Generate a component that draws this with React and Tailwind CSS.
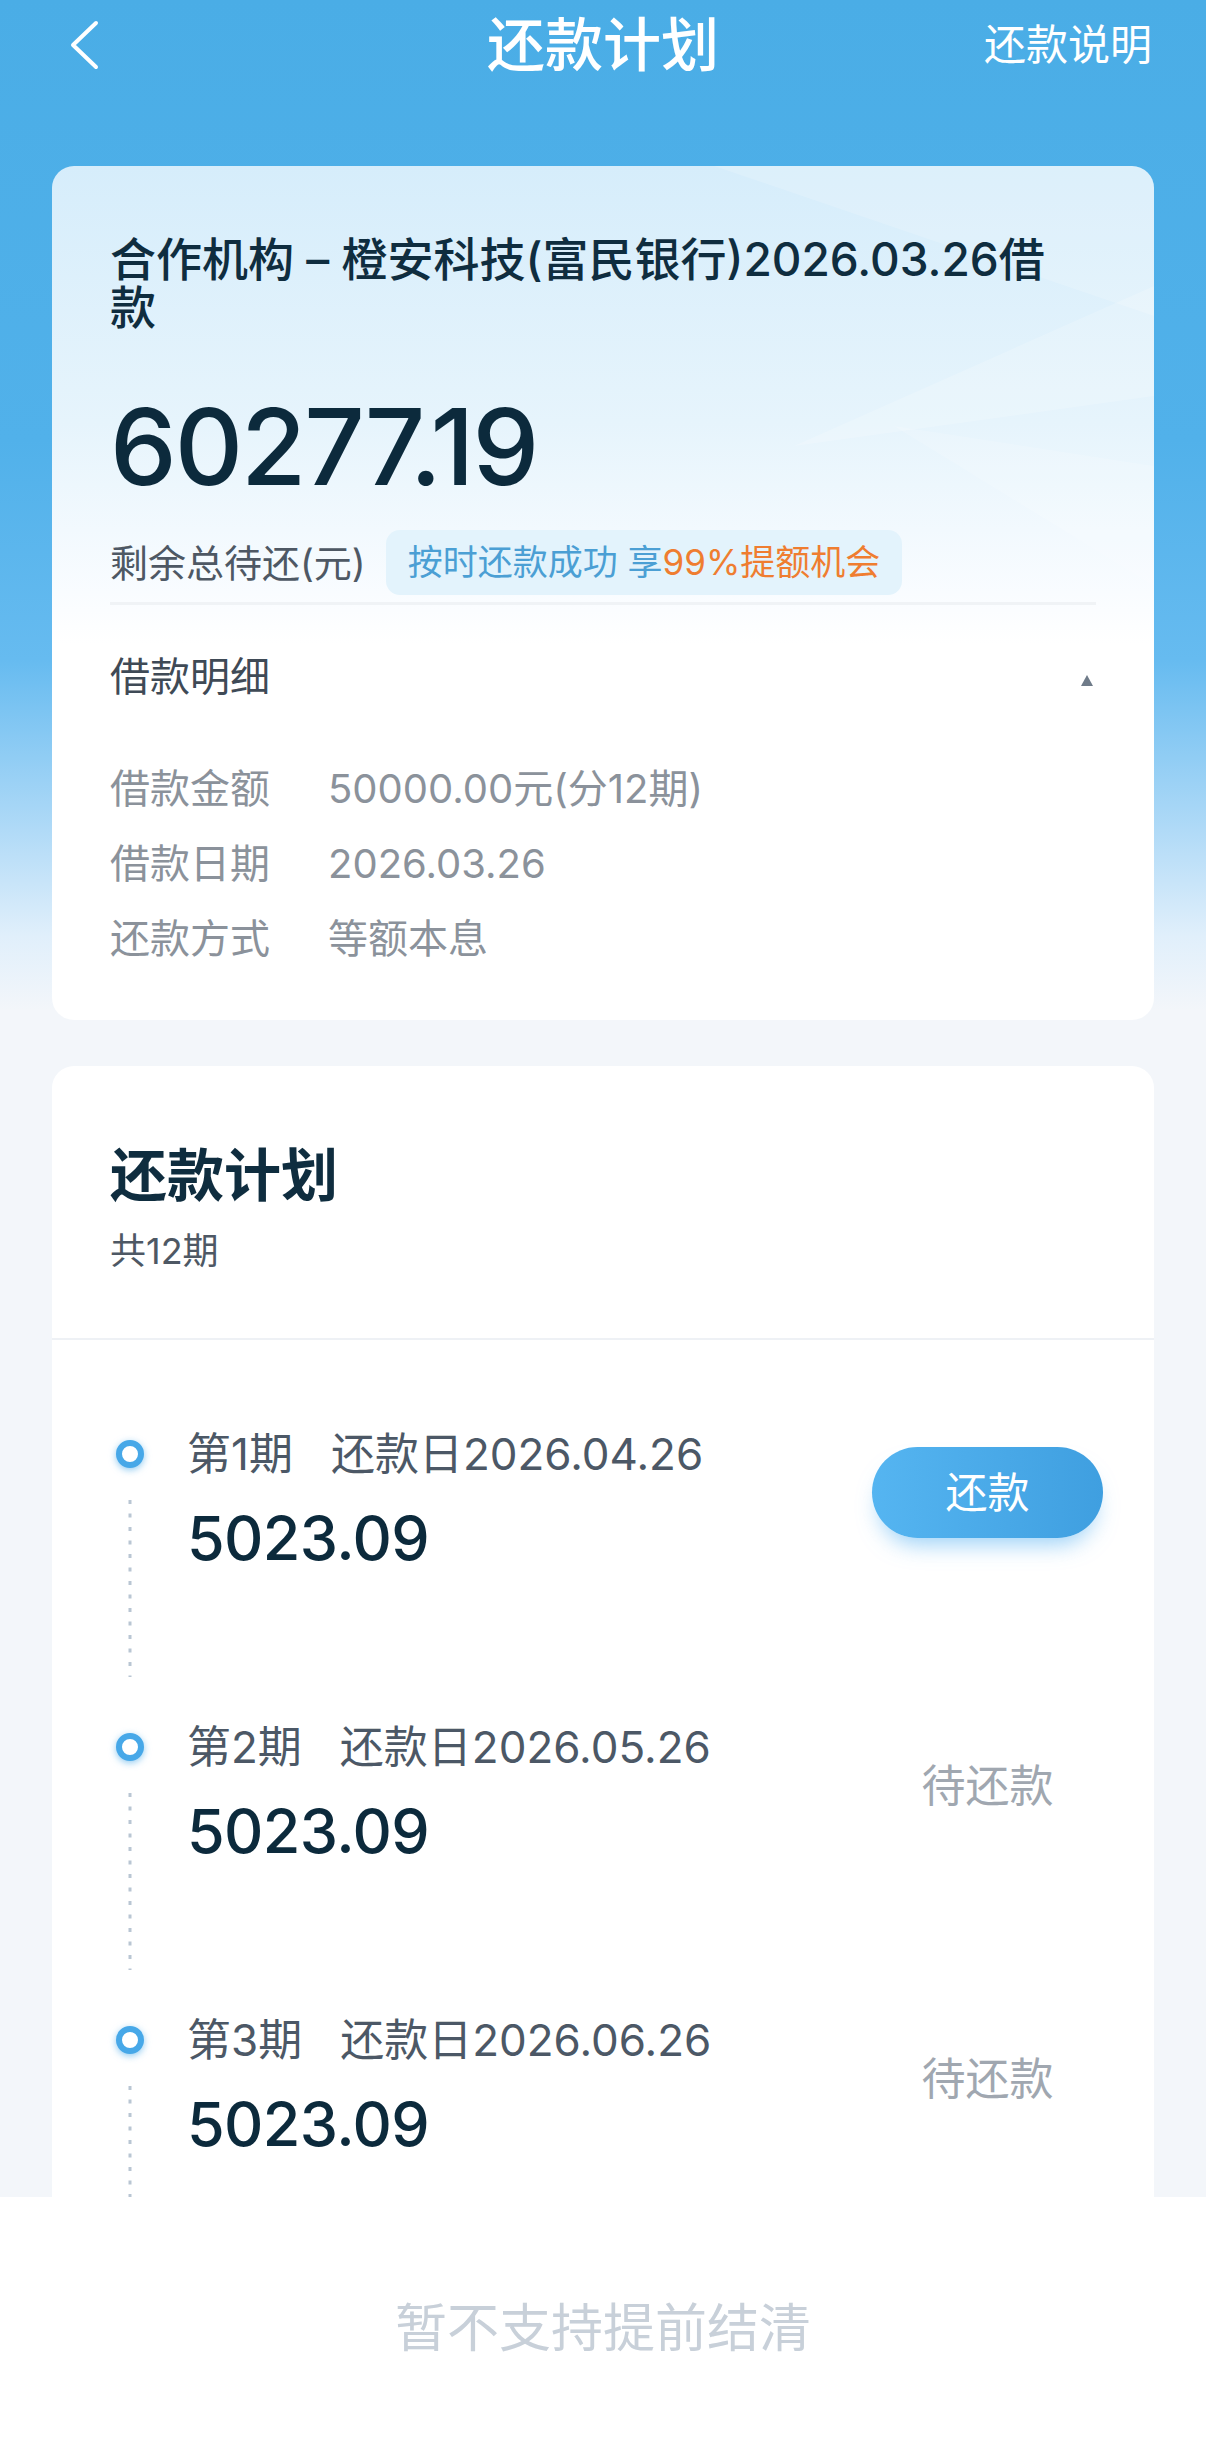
import React from "react";

function Dots({ h }) {
  return (
    <svg width="6" height={h} viewBox={`0 0 6 ${h}`} className="block">
      <line x1="3" y1="2" x2="3" y2={h} stroke="#b9c6d3" strokeWidth="3" strokeDasharray="4 9.5" />
    </svg>
  );
}

function Item({ n, date, last, pay }) {
  return (
    <div className="flex">
      <div className="w-[56px] flex flex-col items-center">
        <div className="mt-[11px] w-[28px] h-[28px] rounded-full border-[6px] border-[#47a8e8] bg-white shadow-[0_2px_7px_rgba(71,168,232,0.6)]" />
        <div className="mt-[30px] mb-[45px]">
          <Dots h={last ? 240 : 179} />
        </div>
      </div>
      <div className="ml-[29px] flex-1">
        <div className="text-[44px] leading-[50px] text-[#4c5866] whitespace-nowrap">
          <span>第{n}期</span>
          <span className="ml-[38px]">还款日{date}</span>
        </div>
        <div className="mt-[27px] text-[61px] leading-[64px] font-medium tracking-[-0.01em] text-[#0c2a3c]">5023.09</div>
      </div>
      <div className="w-[231px]">
        {pay ? (
          <div className="mt-[18px] h-[91px] w-[231px] rounded-full bg-[linear-gradient(90deg,#55b5f1,#3f9fe0)] shadow-[0_14px_22px_-8px_rgba(70,170,240,0.55)] flex items-center justify-center text-[42px] text-white">
            还款
          </div>
        ) : (
          <div className="mt-[18px] h-[91px] flex items-center justify-center text-[44px] text-[#a0a7b0]">待还款</div>
        )}
      </div>
    </div>
  );
}

export default function App() {
  return (
    <div className="w-[1206px] h-[2460px] flex flex-col overflow-hidden bg-[#f3f6fa] font-['Inter','Noto_Sans_CJK_SC',sans-serif]">
      <div className="flex-1 min-h-0 overflow-hidden bg-[linear-gradient(180deg,#4aade6_0px,#51b1ea_440px,#66bbf0_660px,#b0daf7_830px,#e0effb_935px,#f3f6fa_1010px)]">
        {/* header */}
        <div className="h-[90px] grid grid-cols-[1fr_auto_1fr] items-center text-white">
          <div className="pl-[68px] flex items-center">
            <svg width="32" height="50" viewBox="0 0 32 50">
              <polyline points="28,3 5,25 28,47" fill="none" stroke="white" strokeWidth="4" strokeLinecap="round" strokeLinejoin="round" />
            </svg>
          </div>
          <div className="text-[58px] font-medium leading-none">还款计划</div>
          <div className="pr-[54px] text-right text-[42px] leading-none">还款说明</div>
        </div>

        {/* card 1 */}
        <div className="mx-[52px] mt-[76px] rounded-[22px] relative overflow-hidden bg-[linear-gradient(180deg,#d6edfb_0%,#e6f4fc_30%,#f9fcff_50%,#ffffff_56%)]">
          <svg className="absolute right-0 top-0" width="560" height="440" viewBox="0 0 560 440">
            <polygon points="120,0 560,0 560,150" fill="#ffffff" opacity="0.16" />
            <polygon points="200,280 560,120 560,230" fill="#ffffff" opacity="0.18" />
            <polygon points="300,260 560,300 560,420" fill="#ffffff" opacity="0.15" />
          </svg>
          <div className="relative px-[58px] pt-[69px] pb-[44px]">
            <div className="text-[46px] leading-[48px] font-medium text-[#0f2d3f]">
              合作机构 – 橙安科技(富民银行)2026.03.26借
              <br />款
            </div>
            <div className="mt-[63px] text-[106px] leading-none font-medium tracking-[-0.02em] text-[#0c2a3c]">60277.19</div>
            <div className="mt-[30px] flex items-center gap-[20px]">
              <span className="text-[38px] leading-none text-[#4e5864]">剩余总待还(元)</span>
              <span className="h-[65px] px-[22px] rounded-[14px] bg-[#e3f3fc] flex items-center text-[35px] leading-none text-[#4b9fd4]">
                按时还款成功 享<span className="text-[#ef7d30]">99%提额机会</span>
              </span>
            </div>
            <div className="mt-[7px] h-[3px] bg-[#f0f3f6]" />
            <div className="mt-[42px] h-[60px] flex items-center justify-between">
              <span className="text-[40px] text-[#3f4a56]">借款明细</span>
              <svg width="12" height="11" viewBox="0 0 12 11" className="mr-[3px] mt-[6px]">
                <polygon points="6,0 12,11 0,11" fill="#6f7b89" />
              </svg>
            </div>
            <div className="mt-[44px] text-[40px] text-[#8b929b]">
              <div className="h-[75px] flex items-center">
                <span className="w-[218px]">借款金额</span>
                <span>50000.00元(分12期)</span>
              </div>
              <div className="h-[75px] flex items-center">
                <span className="w-[218px]">借款日期</span>
                <span>2026.03.26</span>
              </div>
              <div className="h-[75px] flex items-center">
                <span className="w-[218px]">还款方式</span>
                <span>等额本息</span>
              </div>
            </div>
          </div>
        </div>

        {/* card 2 */}
        <div className="mx-[52px] mt-[46px] rounded-t-[22px] bg-white">
          <div className="px-[58px] pt-[80px] pb-[67px]">
            <div className="text-[57px] leading-[60px] font-semibold text-[#0f2d3f]">还款计划</div>
            <div className="mt-[25px] text-[36px] leading-[40px] text-[#4e5864]">共12期</div>
          </div>
          <div className="h-[2px] bg-[#eef1f5]" />
          <div className="pt-[89px] pl-[50px] pr-[51px]">
            <Item n={1} date="2026.04.26" pay />
            <Item n={2} date="2026.05.26" />
            <Item n={3} date="2026.06.26" last />
          </div>
        </div>
      </div>

      {/* bottom bar */}
      <div className="h-[263px] shrink-0 bg-white flex items-center justify-center">
        <span className="text-[52px] text-[#c8d0d9]">暂不支持提前结清</span>
      </div>
    </div>
  );
}
